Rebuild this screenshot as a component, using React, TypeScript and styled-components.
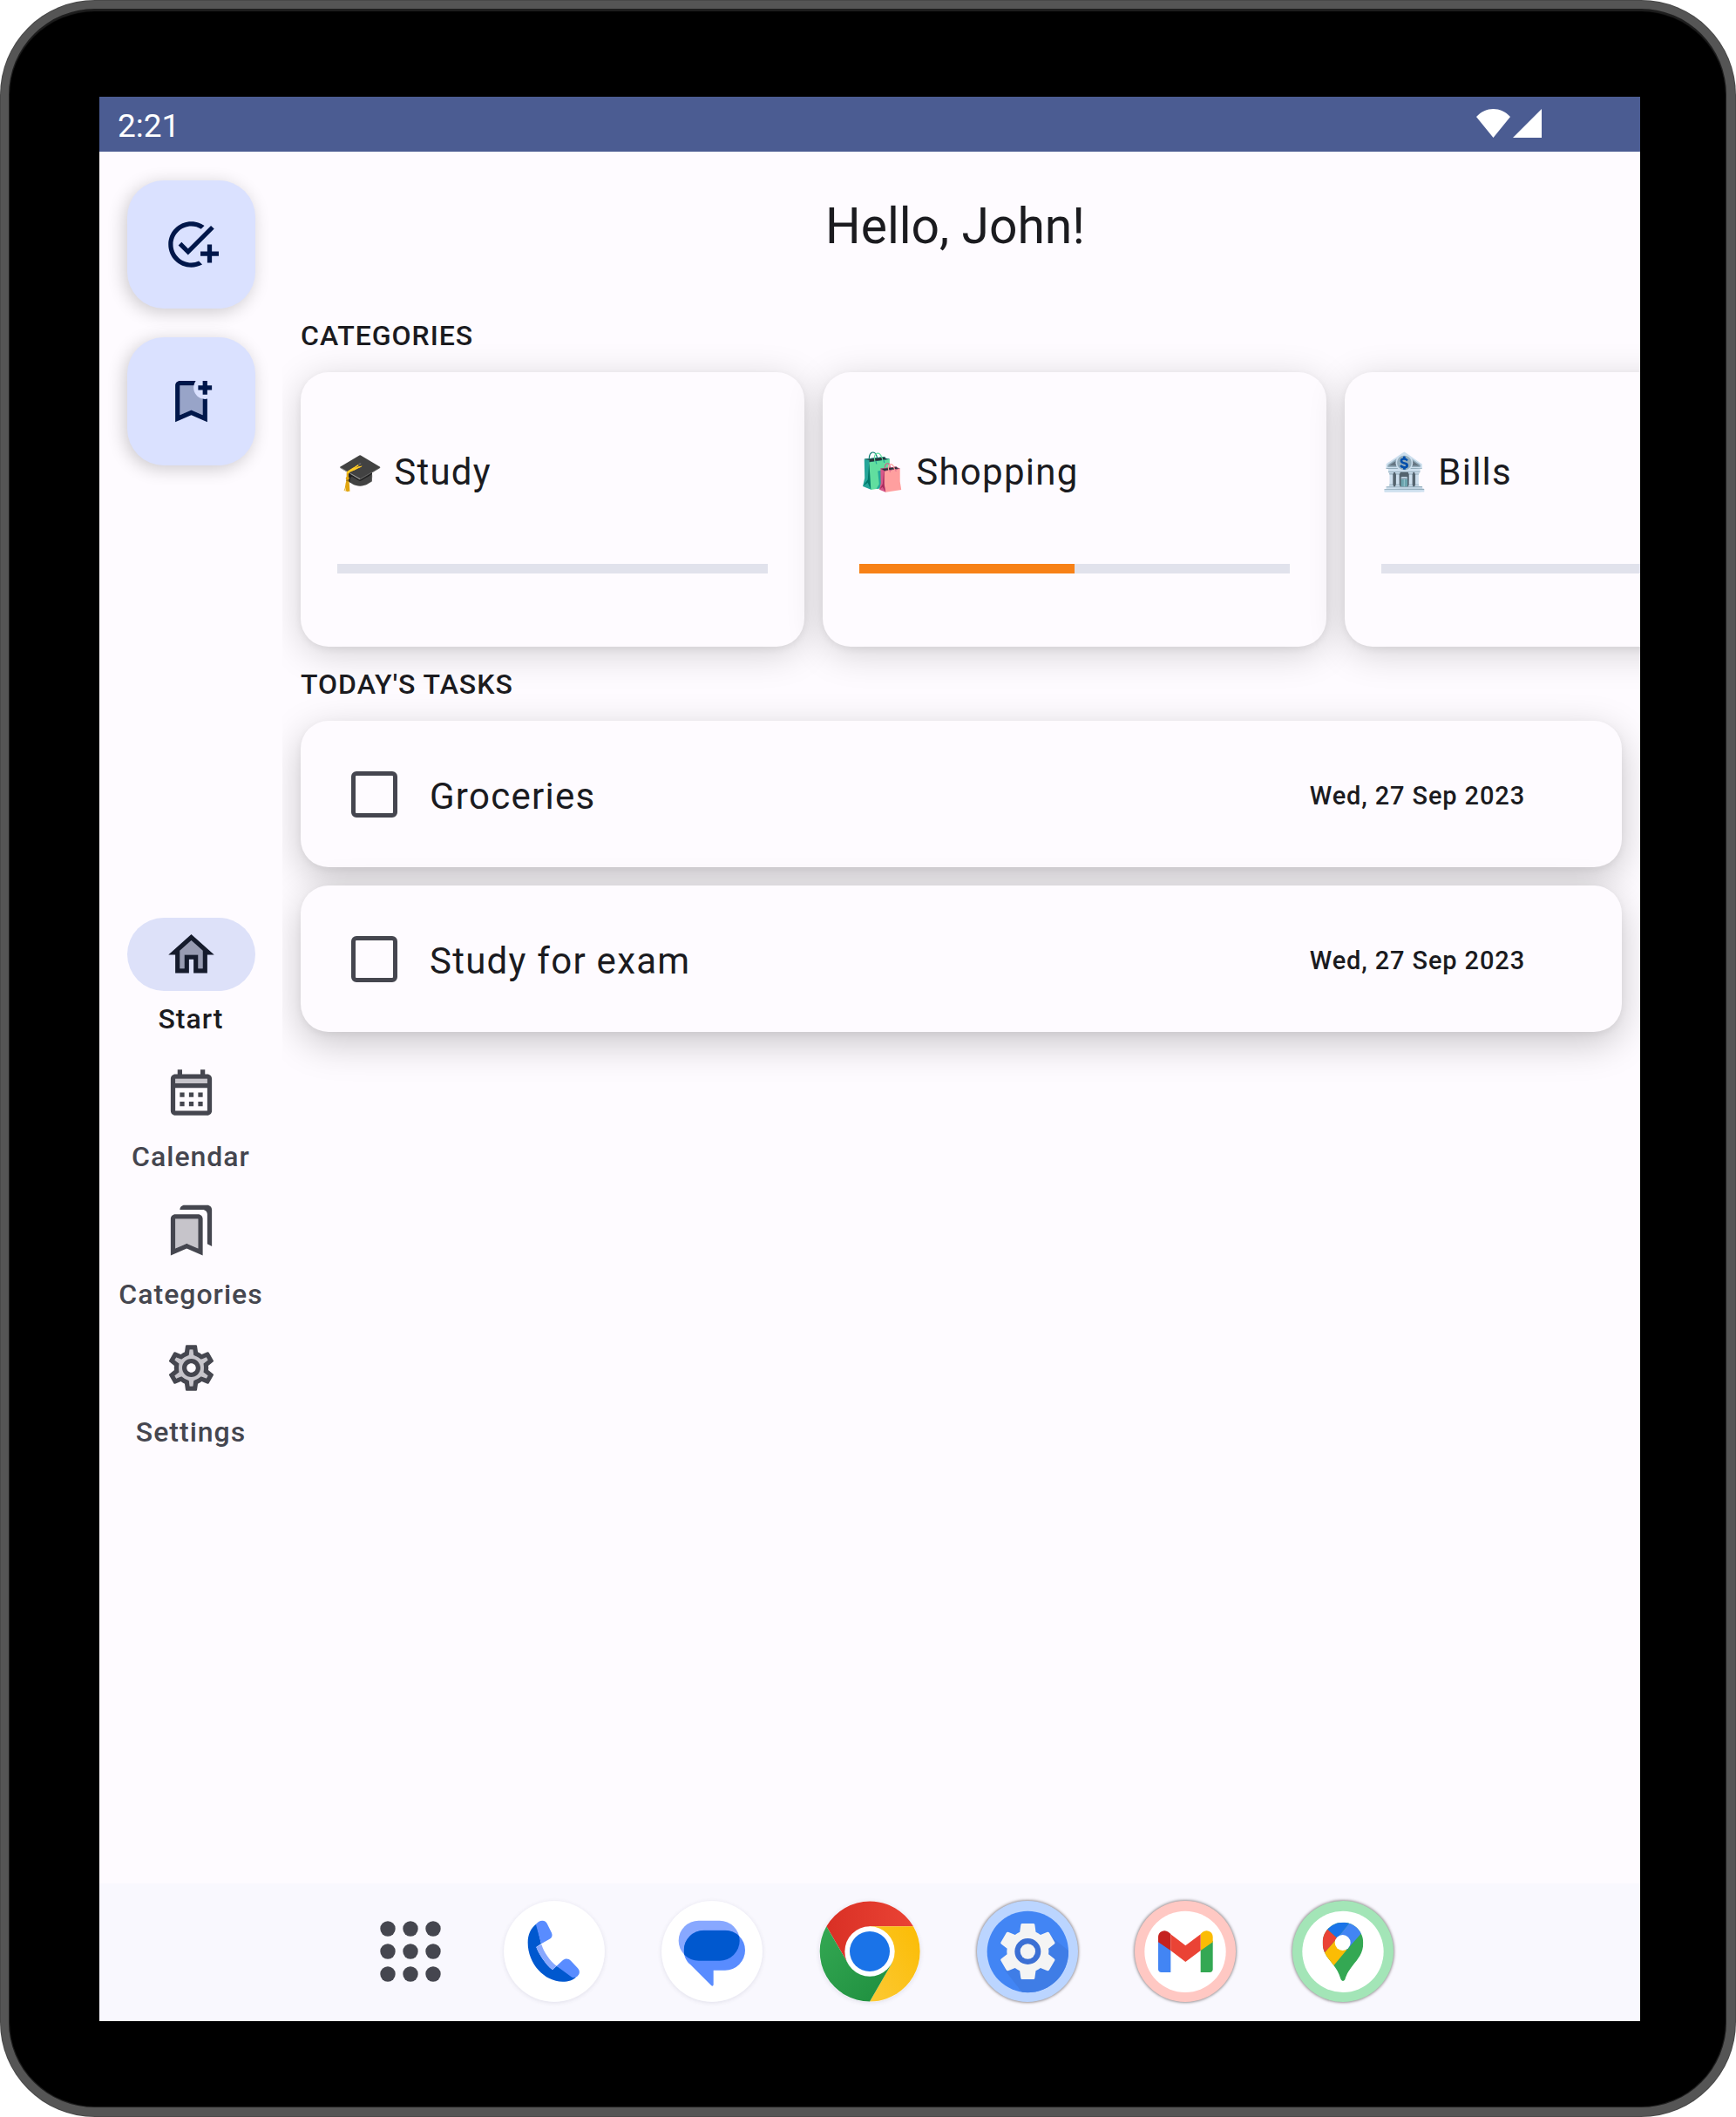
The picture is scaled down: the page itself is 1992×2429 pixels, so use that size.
import React, { useState } from "react";
import styled, { createGlobalStyle } from "styled-components";

const GlobalStyle = createGlobalStyle`
  *, *::before, *::after { box-sizing: border-box; }
  body {
    margin: 0;
    background: #ffffff;
    color: #1b1b1f;
    font-family: Roboto, "Noto Color Emoji", sans-serif;
  }
  button, input { font: inherit; }
`;

/* ---------- device ---------- */

const Bezel = styled.div`
  display: flex;
  margin: 1px;
  min-height: calc(100vh - 2px);
  padding: 101px 99px 99px 104px;
  border: solid #555555;
  border-width: 9px 10px 10px 9px;
  border-radius: 108px;
  background: #000000;
  box-shadow: inset 0 3px 1px #1e1e1e, inset 0 0 1px 1px #222222, inset 0 0 0 1px #111111, 0 0 0 1px #484848;
`;

const Screen = styled.div`
  flex: 1;
  min-width: 0;
  display: flex;
  flex-direction: column;
  overflow: hidden;
  background: #fefbff;
`;

const StatusBar = styled.header`
  display: flex;
  align-items: center;
  justify-content: space-between;
  height: 63px;
  padding: 0 113px 0 21px;
  background: #4b5c92;
  color: #ffffff;
`;

const Clock = styled.time`
  padding-top: 4px;
  font-size: 37px;
  line-height: 42px;
`;

const StatusIcons = styled.div`
  display: flex;
  gap: 3px;
  padding-bottom: 2px;
`;

const AppBody = styled.div`
  flex: 1;
  display: flex;
`;

/* ---------- navigation rail ---------- */

const Rail = styled.aside`
  flex: none;
  display: flex;
  flex-direction: column;
  align-items: center;
  gap: 33px;
  width: 210px;
  padding-top: 33px;
`;

const Fab = styled.button`
  display: grid;
  place-items: center;
  width: 147px;
  height: 147px;
  padding: 0;
  border: 0;
  border-radius: 42px;
  background: #dae1ff;
  color: #00174a;
  box-shadow: -3px 4px 20px rgba(0, 0, 0, 0.2);
`;

const RailNav = styled.nav`
  flex: 1;
  display: flex;
  flex-direction: column;
  justify-content: center;
  gap: 21px;
  margin-top: -12px;
`;

const RailLink = styled.a<{ $active?: boolean }>`
  display: flex;
  flex-direction: column;
  align-items: center;
  gap: 11px;
  color: ${(p) => (p.$active ? "#1b1b1f" : "#45464f")};
  font-size: 32px;
  font-weight: 500;
  line-height: 42px;
  letter-spacing: 1px;
  text-decoration: none;
`;

const Indicator = styled.span<{ $active?: boolean }>`
  display: grid;
  place-items: center;
  width: 147px;
  height: 84px;
  padding-top: 1px;
  border-radius: 42px;
  background: ${(p) => (p.$active ? "#dde1f9" : "transparent")};
  color: ${(p) => (p.$active ? "#151b2c" : "inherit")};
`;

const Glyph = styled.svg`
  display: block;
  width: 63px;
  height: 63px;
  fill: currentColor;
`;

/* ---------- content ---------- */

const Content = styled.main`
  flex: 1;
  min-width: 0;
  overflow: hidden;
`;

const Title = styled.h1`
  margin: 0;
  padding: 4px 14px 0 0;
  font-size: 57px;
  font-weight: 400;
  line-height: 164px;
  text-align: center;
`;

const Section = styled.section`
  padding: 22px 21px 0;
`;

const SectionTitle = styled.h2`
  position: relative;
  z-index: 1;
  margin: 0 0 20px;
  font-size: 32px;
  font-weight: 500;
  line-height: 43px;
  letter-spacing: 1px;
`;

const CategoryRow = styled.div`
  display: flex;
  gap: 21px;
`;

const CategoryCard = styled.article`
  flex: none;
  display: flex;
  flex-direction: column;
  justify-content: space-between;
  width: 578px;
  height: 315px;
  padding: 83px 42px 84px;
  border-radius: 32px;
  background: #fefbff;
  box-shadow: 0 3px 8px rgba(0, 0, 0, 0.06), 0 8px 42px rgba(0, 0, 0, 0.17);
`;

const CategoryName = styled.h3`
  margin: 0;
  font-size: 42px;
  font-weight: 400;
  line-height: 63px;
  letter-spacing: 0.03em;
  white-space: nowrap;
`;

const Meter = styled.progress`
  display: block;
  appearance: none;
  width: 100%;
  height: 11px;
  border: 0;
  background: #e1e2ec;
  &::-webkit-progress-bar { background: #e1e2ec; }
  &::-webkit-progress-value { background: #f78117; }
`;

const TaskList = styled.ul`
  display: flex;
  flex-direction: column;
  gap: 21px;
  margin: 0;
  padding: 0;
  list-style: none;
`;

const TaskCard = styled.li`
  display: flex;
  align-items: center;
  height: 168px;
  padding: 0 111px 0 58px;
  border-radius: 32px;
  background: #fefbff;
  box-shadow: 0 3px 8px rgba(0, 0, 0, 0.05), 0 13px 44px rgba(0, 0, 0, 0.21);
`;

const TaskCheck = styled.input`
  appearance: none;
  flex: none;
  width: 53px;
  height: 53px;
  margin: 0 37px 0 0;
  border: 5px solid #45464f;
  border-radius: 6px;
  &:checked { background: #4b5c92; border-color: #4b5c92; }
`;

const TaskName = styled.label`
  flex: 1;
  padding-top: 4px;
  font-size: 42px;
  line-height: 63px;
  letter-spacing: 0.03em;
`;

const TaskDate = styled.time`
  padding-top: 4px;
  font-size: 29px;
  font-weight: 500;
  line-height: 42px;
  letter-spacing: 0.03em;
`;

/* ---------- dock ---------- */

const Dock = styled.footer`
  display: flex;
  align-items: center;
  justify-content: center;
  gap: 65px;
  height: 158px;
  padding-bottom: 2px;
  background: #f9f8fe;
`;

const DockButton = styled.button<{ $ring?: string; $flat?: boolean }>`
  display: flex;
  justify-content: flex-end;
  width: 116px;
  height: 116px;
  padding: 0;
  border: 0;
  border-radius: 50%;
  background: ${(p) => p.$ring || "transparent"};
  box-shadow: ${(p) =>
    p.$flat ? "none" : p.$ring ? "0 0 3px 1px rgba(60, 50, 50, 0.5)" : "0 1px 5px rgba(60, 60, 90, 0.12)"};
`;

const DockArt = styled.svg`
  display: block;
  height: 116px;
`;

/* ---------- rail icons ---------- */

const AddTaskIcon = () => (
  <Glyph viewBox="0 0 24 24" aria-hidden="true">
    <path d="M22 5.18 10.59 16.6l-4.24-4.24 1.41-1.41 2.83 2.83 10-10L22 5.18zM12 20c-4.41 0-8-3.59-8-8s3.59-8 8-8c1.57 0 3.04.46 4.28 1.25l1.45-1.45C16.1 2.67 14.13 2 12 2 6.48 2 2 6.48 2 12s4.48 10 10 10c1.73 0 3.36-.44 4.78-1.22l-1.5-1.5c-1 .46-2.11.72-3.28.72zm7-5h-3v2h3v3h2v-3h3v-2h-3v-3h-2v3z" />
  </Glyph>
);

const BookmarkAddIcon = () => (
  <Glyph viewBox="0 0 24 24" aria-hidden="true">
    <path opacity=".3" d="M17 10.9c-2.28-.46-4-2.48-4-4.9 0-.34.03-.68.1-1H7v12.97l5-2.14 5 2.14V10.9z" />
    <path d="M17 10.9v7.07l-5-2.14-5 2.14V5h6.1c.15-.74.43-1.4.84-2H7c-1.1 0-2 .9-2 2v16l7-3 7 3V10.9c-.32.07-.66.1-1 .1s-.68-.03-1-.1zM21 7h-2v2h-2V7h-2V5h2V3h2v2h2v2z" />
  </Glyph>
);

const HomeIcon = () => (
  <Glyph viewBox="0 0 24 24" aria-hidden="true">
    <path opacity=".35" d="M7 10.19V18h2v-6h6v6h2v-7.81l-5-4.5z" />
    <path d="M12 5.69l5 4.5V18h-2v-6H9v6H7v-7.81l5-4.5M12 3L2 12h3v8h6v-6h2v6h6v-8h3L12 3z" />
  </Glyph>
);

const CalendarIcon = () => (
  <Glyph viewBox="0 0 24 24" aria-hidden="true">
    <path opacity=".3" d="M5 8h14V6H5v2z" />
    <path
      fillRule="evenodd"
      d="M19 4h-1V2h-2v2H8V2H6v2H5c-1.11 0-1.99.9-1.99 2L3 20c0 1.1.89 2 2 2h14c1.1 0 2-.9 2-2V6c0-1.1-.9-2-2-2zm0 16H5V10h14v10zm0-12H5V6h14v2zM9 14H7v-2h2v2zm4 0h-2v-2h2v2zm4 0h-2v-2h2v2zm-8 4H7v-2h2v2zm4 0h-2v-2h2v2zm4 0h-2v-2h2v2z"
    />
  </Glyph>
);

const BookmarksIcon = () => (
  <Glyph viewBox="0 0 24 24" aria-hidden="true">
    <path opacity=".3" d="M5 7v12.97l5-2.15 5 2.15V7z" />
    <path
      fillRule="evenodd"
      d="M15 7v12.97l-4.21-1.81-.79-.34-.79.34L5 19.97V7h10m4-6H8.99C7.89 1 7 1.9 7 3h10c1.1 0 2 .9 2 2v13l2 1V3c0-1.1-.9-2-2-2zm-4 4H5c-1.1 0-2 .9-2 2v16l7-3 7 3V7c0-1.1-.9-2-2-2z"
    />
  </Glyph>
);

const GEAR_EDGE =
  "M19.43 12.98c.04-.32.07-.64.07-.98 0-.34-.03-.66-.07-.98l2.11-1.65c.19-.15.24-.42.12-.64l-2-3.46c-.09-.16-.26-.25-.44-.25-.06 0-.12.01-.17.03l-2.49 1c-.52-.4-1.08-.73-1.69-.98l-.38-2.65C14.46 2.18 14.25 2 14 2h-4c-.25 0-.46.18-.49.42l-.38 2.65c-.61.25-1.17.59-1.69.98l-2.49-1c-.06-.02-.12-.03-.18-.03-.17 0-.34.09-.43.25l-2 3.46c-.13.22-.07.49.12.64l2.11 1.65c-.04.32-.07.65-.07.98 0 .33.03.66.07.98l-2.11 1.65c-.19.15-.24.42-.12.64l2 3.46c.09.16.26.25.44.25.06 0 .12-.01.17-.03l2.49-1c.52.4 1.08.73 1.69.98l.38 2.65c.03.24.24.42.49.42h4c.25 0 .46-.18.49-.42l.38-2.65c.61-.25 1.17-.59 1.69-.98l2.49 1c.06.02.12.03.18.03.17 0 .34-.09.43-.25l2-3.46c.12-.22.07-.49-.12-.64l-2.11-1.65z";
const GEAR_INSIDE =
  "M17.45 11.27c.04.31.05.52.05.73 0 .21-.02.43-.05.73l-.14 1.13.89.7 1.08.84-.7 1.21-1.27-.51-1.04-.42-.9.68c-.43.32-.84.56-1.25.73l-1.06.43-.16 1.13-.2 1.35h-1.4l-.19-1.35-.16-1.13-1.06-.43c-.43-.18-.83-.41-1.23-.71l-.91-.7-1.06.43-1.27.51-.7-1.21 1.08-.84.89-.7-.14-1.13c-.03-.31-.05-.54-.05-.74s.02-.43.05-.73l.14-1.13-.89-.7-1.08-.84.7-1.21 1.27.51 1.04.42.9-.68c.43-.32.84-.56 1.25-.73l1.06-.43.16-1.13.2-1.35h1.39l.19 1.35.16 1.13 1.06.43c.43.18.83.41 1.23.71l.91.7 1.06-.43 1.27-.51.7 1.21-1.07.85-.89.7.14 1.13z";

const SettingsIcon = () => (
  <Glyph viewBox="0 0 24 24" aria-hidden="true">
    <path opacity=".3" fillRule="evenodd" d={GEAR_INSIDE + "M12 9a3 3 0 1 0 0 6a3 3 0 1 0 0-6z"} />
    <path fillRule="evenodd" d={GEAR_EDGE + GEAR_INSIDE} />
    <path fillRule="evenodd" d="M12 8c-2.21 0-4 1.79-4 4s1.79 4 4 4 4-1.79 4-4-1.79-4-4-4zm0 6c-1.1 0-2-.9-2-2s.9-2 2-2 2 .9 2 2-.9 2-2 2z" />
  </Glyph>
);

/* ---------- status icons ---------- */

const WifiIcon = () => (
  <svg width="39" height="33" viewBox="0 0 39 33" fill="#fff" aria-hidden="true">
    <path d="M0 9C11-3 28-3 39 9L19.500 33z" />
  </svg>
);

const SignalIcon = () => (
  <svg width="33" height="33" viewBox="0 0 33 33" fill="#fff" aria-hidden="true">
    <path d="M33 0v33H0z" />
  </svg>
);

/* ---------- dock art ---------- */

const AppsArt = () => (
  <DockArt width="86" viewBox="0 0 86 116" fill="#45464f" aria-hidden="true">
    {[32, 58, 84].map((y) => [18, 44, 70].map((x) => <circle key={`${x}-${y}`} cx={x} cy={y} r="8.7" />))}
  </DockArt>
);

const PhoneArt = () => (
  <DockArt width="116" viewBox="535 124 348 348" aria-hidden="true">
    <circle cx="709" cy="298" r="173" fill="#fff" />
    <path fill="#0058cf" d="M648 203C628 218 618 240 618 268c0 72 57 134 120 134 20 0 36-6 46-15l-67-39-14 13c-23-16-48-56-56-78l17-11z" />
    <path fill="#88a8ff" d="M647 283l18-9c8 26 28 56 52 74l-14 13c-23-16-48-56-56-78z" />
    <path fill="#598cff" d="M646 206c4-9 13-14 22-14s13 4 16 10l16 32c4 9 1 17-8 22l-28 16z" />
    <path fill="#598cff" d="M717 348l21-19c9-8 20-7 28 1l24 26c8 9 7 20 0 26-6 6-12 7-20 5z" />
  </DockArt>
);

const BUBBLE =
  "M1224 225h73a69 69 0 0 1 0 138h-40v50q-1 6-7 3l-72-72c-15-13-23-30-23-50a69 69 0 0 1 69-69z";

const MessagesArt = () => (
  <DockArt width="116" viewBox="1078 124 348 348" aria-hidden="true">
    <defs>
      <clipPath id="bubble"><path d={BUBBLE} /></clipPath>
    </defs>
    <circle cx="1252" cy="298" r="173" fill="#fff" />
    <rect x="1137" y="192" width="210" height="138" rx="69" fill="#88a8ff" />
    <path fill="#598cff" d={BUBBLE} />
    <rect x="1137" y="192" width="210" height="138" rx="69" fill="#0058cf" clipPath="url(#bubble)" />
  </DockArt>
);

const ChromeArt = () => (
  <DockArt width="116" viewBox="121 94 348 348" aria-hidden="true">
    <defs>
      <linearGradient id="cr" x1="0" x2="1"><stop offset="0" stopColor="#d93025" /><stop offset="1" stopColor="#ea4335" /></linearGradient>
      <linearGradient id="cy" x1="1" y1="0" x2="0" y2="1"><stop offset="0" stopColor="#fbbc04" /><stop offset="1" stopColor="#fcc934" /></linearGradient>
      <linearGradient id="cg" x1="0" y1="0" x2="1" y2="1"><stop offset="0" stopColor="#34a853" /><stop offset="1" stopColor="#1e8e3e" /></linearGradient>
    </defs>
    <path fill="url(#cr)" d="M146 182a172.500 172.500 0 0 1 299 0H295L221 311z" />
    <path fill="url(#cy)" d="M295 182h150a172.500 172.500 0 0 1-150 258.500l75-129.500z" />
    <path fill="url(#cg)" d="M146 182l75 129h149l-75 129.500A172.500 172.500 0 0 1 146 182z" />
    <circle cx="295" cy="268" r="86" fill="#fff" />
    <circle cx="295" cy="268" r="69" fill="#1a73e8" />
  </DockArt>
);

const SettingsArt = () => (
  <DockArt width="116" viewBox="663 93 348 348" aria-hidden="true">
    <circle cx="838" cy="268" r="140" fill="#4285f4" />
    <path fill="#3f7de6" d="M910 210l68 54a140 140 0 0 1-160 143l-60-77z" />
    <g transform="translate(718 147) scale(10)">
      <path
        fill="#f4f4f4"
        d="M19.140 12.940c.04-.3.06-.61.06-.94 0-.32-.02-.64-.07-.94l2.030-1.580c.18-.14.23-.41.12-.61l-1.920-3.320c-.12-.22-.37-.29-.59-.22l-2.390.96c-.5-.38-1.030-.7-1.620-.94l-.36-2.540c-.04-.24-.24-.41-.48-.41h-3.840c-.24 0-.43.17-.47.41l-.36 2.540c-.59.24-1.130.57-1.620.94l-2.390-.96c-.22-.08-.47 0-.59.22L2.740 8.870c-.12.21-.08.47.12.61l2.030 1.580c-.05.3-.09.63-.09.94s.02.64.07.94l-2.030 1.580c-.18.14-.23.41-.12.61l1.920 3.320c.12.22.37.29.59.22l2.390-.96c.5.38 1.030.7 1.620.94l.36 2.540c.05.24.24.41.48.41h3.840c.24 0 .44-.17.47-.41l.36-2.540c.59-.24 1.130-.56 1.620-.94l2.390.96c.22.08.47 0 .59-.22l1.920-3.320c.12-.22.07-.47-.12-.61l-2.010-1.580z"
      />
    </g>
    <circle cx="838" cy="267" r="45" fill="#3b6fd4" />
    <circle cx="838" cy="267" r="26" fill="#f4f4f4" />
  </DockArt>
);

const GmailArt = () => (
  <DockArt width="116" viewBox="67 93 348 348" aria-hidden="true">
    <circle cx="241" cy="268" r="140" fill="#fff" />
    <path fill="#4285f4" d="M148 230l43 30v79h-32q-11 0-11-11z" />
    <path fill="#34a853" d="M336 230l-42 30v79h31q11 0 11-11z" />
    <path fill="#c5221f" d="M148 235v-18a22 22 0 0 1 35-17l8 7v57z" />
    <path fill="#fbbc04" d="M336 235v-18a22 22 0 0 0-35-17l-7 7v57z" />
    <path fill="#ea4335" d="M191 208l51 39 52-39v56l-52 39-51-39z" />
  </DockArt>
);

const MapsArt = () => (
  <DockArt width="116" viewBox="610 93 348 348" aria-hidden="true">
    <defs>
      <clipPath id="pin">
        <path d="M784 167c39 0 70 31 70 70 0 36-19 57-36 78-18 23-23 35-27 49q-7 10-14 0c-5-14-9-29-25-49-17-23-38-42-38-78 0-39 31-70 70-70z" />
      </clipPath>
    </defs>
    <circle cx="784" cy="268" r="140" fill="#fff" />
    <g clipPath="url(#pin)">
      <path fill="#34a853" d="M700 150h170v230H700z" />
      <path fill="#4285f4" d="M805 170l-41 51 33 41 54-62v-50h-46z" />
      <path fill="#fbbc04" d="M721 271l43-50 33 41-45 54-52 4z" />
      <path fill="#ea4335" d="M731 191l33 30-43 50-31-11v-69z" />
      <path fill="#1a73e8" d="M731 191l33 30 41-51v-20h-85z" />
    </g>
    <circle cx="783" cy="237" r="27" fill="#fff" />
  </DockArt>
);

/* ---------- data ---------- */

const destinations = [
  { name: "Start", Icon: HomeIcon },
  { name: "Calendar", Icon: CalendarIcon },
  { name: "Categories", Icon: BookmarksIcon },
  { name: "Settings", Icon: SettingsIcon },
];

const categories = [
  { emoji: "🎓", name: "Study", progress: 0 },
  { emoji: "🛍️", name: "Shopping", progress: 50 },
  { emoji: "🏦", name: "Bills", progress: 0 },
];

const tasks = [
  { id: "groceries", name: "Groceries", date: "Wed, 27 Sep 2023" },
  { id: "exam", name: "Study for exam", date: "Wed, 27 Sep 2023" },
];

const dockApps = [
  { name: "Phone", Art: PhoneArt },
  { name: "Messages", Art: MessagesArt },
  { name: "Chrome", Art: ChromeArt },
  { name: "Settings", Art: SettingsArt, ring: "#bbd5ff" },
  { name: "Gmail", Art: GmailArt, ring: "#ffc8c3" },
  { name: "Maps", Art: MapsArt, ring: "#a3e5b7" },
];

export default function App() {
  const [active, setActive] = useState("Start");

  return (
    <>
      <GlobalStyle />
      <Bezel>
        <Screen>
          <StatusBar>
            <Clock>2:21</Clock>
            <StatusIcons>
              <WifiIcon />
              <SignalIcon />
            </StatusIcons>
          </StatusBar>

          <AppBody>
            <Rail>
              <Fab type="button" aria-label="Add task"><AddTaskIcon /></Fab>
              <Fab type="button" aria-label="Add category"><BookmarkAddIcon /></Fab>
              <RailNav>
                {destinations.map(({ name, Icon }) => (
                  <RailLink key={name} href={`#${name.toLowerCase()}`} $active={active === name} onClick={() => setActive(name)}>
                    <Indicator $active={active === name}><Icon /></Indicator>
                    {name}
                  </RailLink>
                ))}
              </RailNav>
            </Rail>

            <Content>
              <Title>Hello, John!</Title>

              <Section>
                <SectionTitle>CATEGORIES</SectionTitle>
                <CategoryRow>
                  {categories.map((c) => (
                    <CategoryCard key={c.name}>
                      <CategoryName>{c.emoji} {c.name}</CategoryName>
                      <Meter max={100} value={c.progress} aria-label={`${c.name} progress`} />
                    </CategoryCard>
                  ))}
                </CategoryRow>
              </Section>

              <Section>
                <SectionTitle>TODAY'S TASKS</SectionTitle>
                <TaskList>
                  {tasks.map((t) => (
                    <TaskCard key={t.id}>
                      <TaskCheck type="checkbox" id={t.id} />
                      <TaskName htmlFor={t.id}>{t.name}</TaskName>
                      <TaskDate dateTime="2023-09-27">{t.date}</TaskDate>
                    </TaskCard>
                  ))}
                </TaskList>
              </Section>
            </Content>
          </AppBody>

          <Dock>
            <DockButton type="button" aria-label="All apps" $flat><AppsArt /></DockButton>
            {dockApps.map(({ name, Art, ring }) => (
              <DockButton key={name} type="button" aria-label={name} $ring={ring}><Art /></DockButton>
            ))}
          </Dock>
        </Screen>
      </Bezel>
    </>
  );
}
